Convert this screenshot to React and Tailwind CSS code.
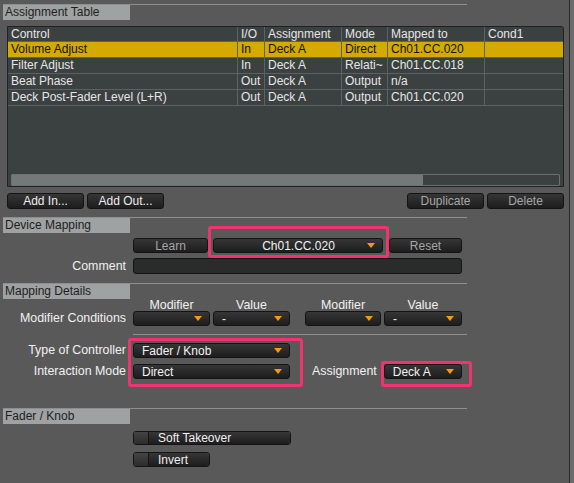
import React from "react";

const rows = [
  { control: "Volume Adjust", io: "In", assign: "Deck A", mode: "Direct", mapped: "Ch01.CC.020", sel: true },
  { control: "Filter Adjust", io: "In", assign: "Deck A", mode: "Relati~", mapped: "Ch01.CC.018" },
  { control: "Beat Phase", io: "Out", assign: "Deck A", mode: "Output", mapped: "n/a" },
  { control: "Deck Post-Fader Level (L+R)", io: "Out", assign: "Deck A", mode: "Output", mapped: "Ch01.CC.020" },
];

const cols = "grid grid-cols-[230px_27px_77px_46px_97px_1fr]";
const base =
  "flex items-center rounded-[3px] border border-[#141414] bg-gradient-to-b from-[#363636] to-[#1d1d1d] text-[12px] leading-none";
const btn = `${base} justify-center`;

const Arrow = () => (
  <svg width="8" height="5" viewBox="0 0 8 5" className="shrink-0">
    <path d="M0 0H8L4 5Z" fill="#f59a12" />
  </svg>
);

const Dropdown = ({ label, className = "", center = false }) => (
  <div className={`${base} ${className} justify-between pl-[8px] pr-[7px] text-[#f2f2f2]`}>
    <span className={center ? "flex-1 text-center pl-[8px]" : ""}>{label}</span>
    <Arrow />
  </div>
);

const SectionHeader = ({ title, className = "" }) => (
  <div className={`ml-[3px] w-[464px] h-[16px] border-t border-[#8e8e8e] ${className}`}>
    <div className="w-[127px] h-[15px] bg-[#9ea2a2] text-[#1e1e1e] text-[12px] leading-[15px] pl-[2px]">
      {title}
    </div>
  </div>
);

const Label = ({ children }) => (
  <div className="w-[126px] text-right text-[12.4px] text-[#f0f0f0] leading-none">{children}</div>
);

const Toggle = ({ label, className = "" }) => (
  <div className={`flex rounded-[3px] border border-[#141414] overflow-hidden ${className}`}>
    <div className="w-[15px] bg-gradient-to-b from-[#444] to-[#2c2c2c] border-r border-[#141414]" />
    <div className="flex-1 flex items-center pl-[9px] bg-gradient-to-b from-[#363636] to-[#1d1d1d] text-[12px] text-[#f0f0f0] leading-none">
      {label}
    </div>
  </div>
);

export default function App() {
  return (
    <div
      className="w-[574px] h-[483px] bg-[#6b6b6b] overflow-hidden"
      style={{ fontFamily: '"Liberation Sans", Arial, sans-serif' }}
    >
      <div className="relative w-[570px] h-[483px] bg-[#595959] border-r border-[#2a2a2a] pt-[4px]">
        <SectionHeader title="Assignment Table" />

        {/* table */}
        <div className="mt-[6px] ml-[7px] w-[557px] h-[161px] flex flex-col border border-[#1e2222] rounded-tr-[3px] bg-[#3b4040] text-[12px] text-[#e6e6e6]">
          <div className="flex-1">
            <div className={`${cols} h-[15px] border-b border-[#5c6161]`}>
              {["Control", "I/O", "Assignment", "Mode", "Mapped to", "Cond1"].map((h, i) => (
                <div key={h} className={`pl-[3px] leading-[15px] ${i < 5 ? "border-r border-[#5c6161]" : ""}`}>
                  {h}
                </div>
              ))}
            </div>
            {rows.map((r) => (
              <div
                key={r.control}
                className={`${cols} h-[16px] border-b border-[#5c6161] ${r.sel ? "bg-[#d4aa00] text-[#111]" : ""}`}
              >
                {[r.control, r.io, r.assign, r.mode, r.mapped, ""].map((c, i) => (
                  <div
                    key={i}
                    className={`pl-[3px] leading-[15px] whitespace-nowrap overflow-hidden ${i < 5 ? "border-r border-[#5c6161]" : ""}`}
                  >
                    {c}
                  </div>
                ))}
              </div>
            ))}
          </div>
          <div className="mx-[3px] h-[12px] border border-[#6b7070] rounded-[1px]">
            <div className="w-[411px] h-full bg-[#737878]" />
          </div>
        </div>

        {/* table buttons */}
        <div className="mt-[6px] ml-[7px] w-[557px] h-[16px] flex gap-[3px]">
          <div className={`${btn} w-[77px] text-[#ececec]`}>Add In...</div>
          <div className={`${btn} w-[77px] text-[#ececec]`}>Add Out...</div>
          <div className="flex-1" />
          <div className={`${btn} w-[77px] text-[#a6a6a6]`}>Duplicate</div>
          <div className={`${btn} w-[77px] text-[#a6a6a6]`}>Delete</div>
        </div>

        <SectionHeader title="Device Mapping" className="mt-[8px]" />

        <div className="mt-[5px] h-[15px] flex">
          <div className={`${btn} ml-[133px] w-[75px] text-[#a6a6a6]`}>Learn</div>
          <Dropdown label="Ch01.CC.020" center className="ml-[5px] w-[170px]" />
          <div className={`${btn} ml-[6px] w-[73px] text-[#a6a6a6]`}>Reset</div>
        </div>

        <div className="mt-[5px] h-[16px] flex items-center">
          <Label>Comment</Label>
          <div className="ml-[7px] w-[329px] h-[16px] rounded-[3px] border border-[#141414] bg-[#2a2c2c]" />
        </div>

        <SectionHeader title="Mapping Details" className="mt-[9px]" />

        <div className="h-[12px] flex text-[12.4px] text-[#f0f0f0] leading-none">
          <div className="ml-[133px] w-[77px] text-center">Modifier</div>
          <div className="ml-[3px] w-[77px] text-center">Value</div>
          <div className="ml-[15px] w-[76px] text-center">Modifier</div>
          <div className="ml-[3px] w-[78px] text-center">Value</div>
        </div>

        <div className="h-[15px] flex items-center">
          <Label>Modifier Conditions</Label>
          <Dropdown label="" className="ml-[7px] w-[77px] h-[15px]" />
          <Dropdown label="-" className="ml-[3px] w-[77px] h-[15px]" />
          <Dropdown label="" className="ml-[15px] w-[76px] h-[15px]" />
          <Dropdown label="-" className="ml-[3px] w-[78px] h-[15px]" />
        </div>

        <div className="mt-[8px] ml-[133px] w-[334px] h-px bg-[#8e8e8e]" />

        <div className="mt-[8px] h-[15px] flex items-center">
          <Label>Type of Controller</Label>
          <Dropdown label="Fader / Knob" className="ml-[7px] w-[157px] h-[15px]" />
        </div>

        <div className="mt-[6px] h-[15px] flex items-center">
          <Label>Interaction Mode</Label>
          <Dropdown label="Direct" className="ml-[7px] w-[157px] h-[15px]" />
          <div className="ml-[22px] text-[12.4px] text-[#f0f0f0] leading-none">Assignment</div>
          <Dropdown label="Deck A" className="ml-[7px] w-[78px] h-[15px]" />
        </div>

        <SectionHeader title="Fader / Knob" className="mt-[29px]" />

        <Toggle label="Soft Takeover" className="mt-[7px] ml-[133px] w-[158px] h-[14px]" />
        <Toggle label="Invert" className="mt-[7px] ml-[133px] w-[77px] h-[15px]" />

        {/* annotation highlights */}
        <div className="absolute left-[208px] top-[226px] w-[181px] h-[32px] border-[3px] border-[#f0346f] rounded-[3px]" />
        <div className="absolute left-[128px] top-[338px] w-[175px] h-[49px] border-[3px] border-[#f0346f] rounded-[3px]" />
        <div className="absolute left-[381px] top-[361px] w-[91px] h-[26px] border-[3px] border-[#f0346f] rounded-[3px]" />
      </div>
    </div>
  );
}
